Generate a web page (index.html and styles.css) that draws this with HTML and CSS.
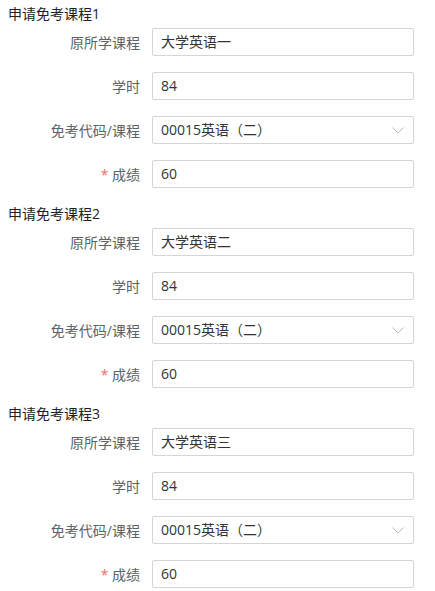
FILE: index.html
```html
<!DOCTYPE html>
<html lang="zh">
<head>
<meta charset="utf-8">
<link rel="stylesheet" href="styles.css">
</head>
<body>
<div class="form">
  <section class="group">
    <h3 class="title">申请免考课程1</h3>
    <div class="row"><label class="label">原所学课程</label><div class="input">大学英语一</div></div>
    <div class="row"><label class="label">学时</label><div class="input">84</div></div>
    <div class="row"><label class="label">免考代码/课程</label><div class="input select">00015英语（二）<svg class="arrow" viewBox="0 0 12 7" width="12" height="7"><path d="M0.5 0.5 L6 6 L11.5 0.5" fill="none" stroke="#b4b8c0" stroke-width="1"/></svg></div></div>
    <div class="row"><label class="label"><span class="req">*</span> 成绩</label><div class="input">60</div></div>
  </section>
  <section class="group">
    <h3 class="title">申请免考课程2</h3>
    <div class="row"><label class="label">原所学课程</label><div class="input">大学英语二</div></div>
    <div class="row"><label class="label">学时</label><div class="input">84</div></div>
    <div class="row"><label class="label">免考代码/课程</label><div class="input select">00015英语（二）<svg class="arrow" viewBox="0 0 12 7" width="12" height="7"><path d="M0.5 0.5 L6 6 L11.5 0.5" fill="none" stroke="#b4b8c0" stroke-width="1"/></svg></div></div>
    <div class="row"><label class="label"><span class="req">*</span> 成绩</label><div class="input">60</div></div>
  </section>
  <section class="group">
    <h3 class="title">申请免考课程3</h3>
    <div class="row"><label class="label">原所学课程</label><div class="input">大学英语三</div></div>
    <div class="row"><label class="label">学时</label><div class="input">84</div></div>
    <div class="row"><label class="label">免考代码/课程</label><div class="input select">00015英语（二）<svg class="arrow" viewBox="0 0 12 7" width="12" height="7"><path d="M0.5 0.5 L6 6 L11.5 0.5" fill="none" stroke="#b4b8c0" stroke-width="1"/></svg></div></div>
    <div class="row"><label class="label"><span class="req">*</span> 成绩</label><div class="input">60</div></div>
  </section>
</div>
</body>
</html>
```
FILE: styles.css
```css
html, body {
  margin: 0;
  padding: 0;
  background: #fff;
}
body {
  font-family: "Open Sans", "Noto Sans CJK SC", sans-serif;
  font-size: 14px;
  color: #333;
}
.form {
  width: 435px;
}
.group {
  padding-top: 4px;
  margin-bottom: 12px;
}
.title {
  margin: 0 0 4px 8px;
  font-size: 14px;
  font-weight: normal;
  line-height: 20px;
  color: #222;
}
.row {
  display: flex;
  align-items: center;
  height: 28px;
  margin-bottom: 16px;
}
.row:last-child {
  margin-bottom: 0;
}
.label {
  width: 140px;
  margin-right: 12px;
  text-align: right;
  color: #606266;
}
.req {
  color: #f56c6c;
}
.input {
  box-sizing: border-box;
  width: 262px;
  height: 28px;
  border: 1px solid #d3d4dc;
  border-radius: 2px;
  padding: 0 8px;
  line-height: 26px;
  color: #333;
  display: flex;
  align-items: center;
}
.select {
  justify-content: space-between;
}
.arrow {
  margin-right: 1px;
}
```
